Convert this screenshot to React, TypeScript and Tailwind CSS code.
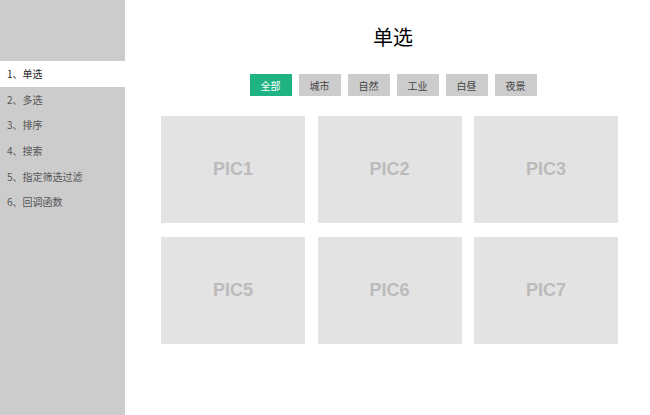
import React, { useState } from "react";

const menuItems = ["1、单选", "2、多选", "3、排序", "4、搜索", "5、指定筛选过滤", "6、回调函数"];
const tags = ["全部", "城市", "自然", "工业", "白昼", "夜景"];
const pics = ["PIC1", "PIC2", "PIC3", "PIC5", "PIC6", "PIC7"];

const App: React.FC = () => {
  const [activeMenu, setActiveMenu] = useState(0);
  const [activeTag, setActiveTag] = useState(0);

  return (
    <div
      className="flex w-[650px] h-[415px] bg-white"
      style={{ fontFamily: '"Noto Sans CJK SC", "Liberation Sans", sans-serif' }}
    >
      <div className="w-[125px] shrink-0 bg-[#cccccc] pt-[61px]">
        {menuItems.map((item, i) => (
          <div
            key={item}
            onClick={() => setActiveMenu(i)}
            className={`h-[25.6px] flex items-center pl-[7px] text-[10px] cursor-pointer ${
              activeMenu === i ? "bg-white text-[#222]" : "text-[#555]"
            }`}
          >
            {item}
          </div>
        ))}
      </div>

      <div className="flex-1 pl-[11px]">
        <h1 className="mt-[24px] text-center text-[20px] leading-[26px] text-black">单选</h1>

        <div className="mt-[24px] flex justify-center gap-[7px]">
          {tags.map((tag, i) => (
            <button
              key={tag}
              onClick={() => setActiveTag(i)}
              className={`h-[22px] w-[42px] text-[10px] ${
                activeTag === i ? "bg-[#1fb384] text-white" : "bg-[#cccccc] text-[#444]"
              }`}
            >
              {tag}
            </button>
          ))}
        </div>

        <div className="ml-[25px] mt-[20px] w-[457px] grid grid-cols-3 gap-x-[12.5px] gap-y-[14px]">
          {pics.map((pic) => (
            <div
              key={pic}
              className="h-[107px] bg-[#e3e3e3] flex items-center justify-center text-[18px] font-bold text-[#bbbbbb]"
              style={{ fontFamily: '"Liberation Sans", Arial, sans-serif' }}
            >
              {pic}
            </div>
          ))}
        </div>
      </div>
    </div>
  );
};

export default App;
